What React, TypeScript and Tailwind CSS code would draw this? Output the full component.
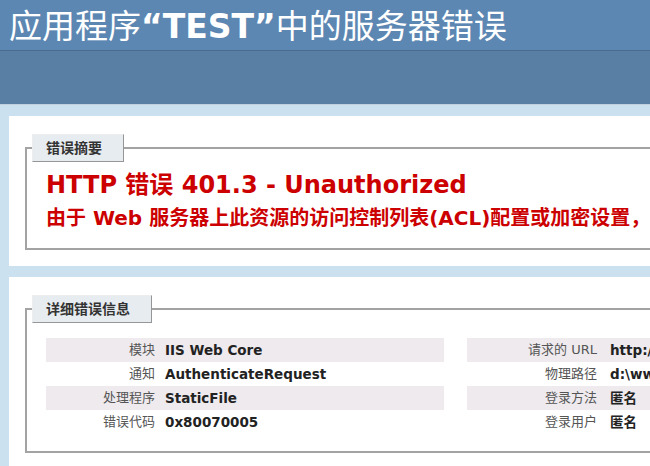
const leftRows = [
  { label: '模块', value: 'IIS Web Core' },
  { label: '通知', value: 'AuthenticateRequest' },
  { label: '处理程序', value: 'StaticFile' },
  { label: '错误代码', value: '0x80070005' },
]

const rightRows = [
  { label: '请求的 URL', value: 'http://localhost:80/test/index.html' },
  { label: '物理路径', value: 'd:\\wwwroot\\test\\index.html' },
  { label: '登录方法', value: '匿名' },
  { label: '登录用户', value: '匿名' },
]

const Legend = ({ children }: { children: string }) => (
  <legend className="-ml-[14px] h-[28px] border-t border-l border-t-[#EDEDED] border-l-[#EDEDED] border-r border-b border-r-[#969696] border-b-[#969696] bg-[#E7ECF0] pl-[13px] pr-[21px] text-[14px] leading-[26px] font-bold text-[#333]">
    {children}
  </legend>
)

const DetailTable = ({
  rows,
  labelWidth,
  gap,
  width,
}: {
  rows: { label: string; value: string }[]
  labelWidth: string
  gap: string
  width: string
}) => (
  <div className={`flex flex-col ${width}`}>
    {rows.map((row, i) => (
      <div
        key={row.label}
        className={`flex h-[24px] items-center whitespace-nowrap ${i % 2 === 0 ? 'bg-[#EEEAEE]' : ''}`}
      >
        <span className={`${labelWidth} shrink-0 text-right text-[13px] text-[#555]`}>{row.label}</span>
        <span className={`${gap} text-[13.5px] font-bold text-[#222]`}>{row.value}</span>
      </div>
    ))}
  </div>
)

export default function App() {
  return (
    <div className="h-[466px] w-[650px] overflow-hidden bg-[#CBE1EF] font-['DejaVu_Sans','Noto_Sans_CJK_SC',sans-serif]">
      <div className="h-[50px] bg-[#5C87B2] px-[9px]">
        <h1 className="whitespace-nowrap font-['Noto_Sans_CJK_SC',sans-serif] text-[33px] leading-[48px] font-normal text-white">
          应用程序<span className="font-['DejaVu_Sans',sans-serif] font-bold">“TEST”</span>中的服务器错误
        </h1>
      </div>
      <div className="h-[55px] border-t border-b border-t-[#4A6C8E] border-b-[#C1CFDD] bg-[#5A7FA5]" />

      <div className="flex flex-col gap-[11px] pt-[11px] pl-[9px]">
        <div className="h-[150px] w-[1200px] bg-white pt-[18px]">
          <fieldset className="ml-[16px] w-[1160px] border-2 border-[#a3a3a3] pr-[19px] pb-[16px] pl-[19px]">
            <Legend>错误摘要</Legend>
            <h2 className="mt-[8px] whitespace-nowrap text-[24px] leading-[30px] font-bold text-[#CC0000]">
              HTTP 错误 401.3 - Unauthorized
            </h2>
            <h3 className="mt-[4px] whitespace-nowrap text-[20px] leading-[28px] font-bold text-[#CC0000]">
              由于 Web 服务器上此资源的访问控制列表(ACL)配置或加密设置，
            </h3>
          </fieldset>
        </div>

        <div className="h-[200px] w-[1200px] bg-white pt-[18px]">
          <fieldset className="ml-[16px] w-[1160px] border-2 border-[#a3a3a3] pr-[19px] pb-[17px] pl-[19px]">
            <Legend>详细错误信息</Legend>
            <div className="mt-[15px] flex gap-[23px]">
              <DetailTable rows={leftRows} labelWidth="w-[109px]" gap="pl-[10px]" width="w-[398px]" />
              <DetailTable rows={rightRows} labelWidth="w-[130px]" gap="pl-[13px]" width="w-[700px]" />
            </div>
          </fieldset>
        </div>
      </div>
    </div>
  )
}
